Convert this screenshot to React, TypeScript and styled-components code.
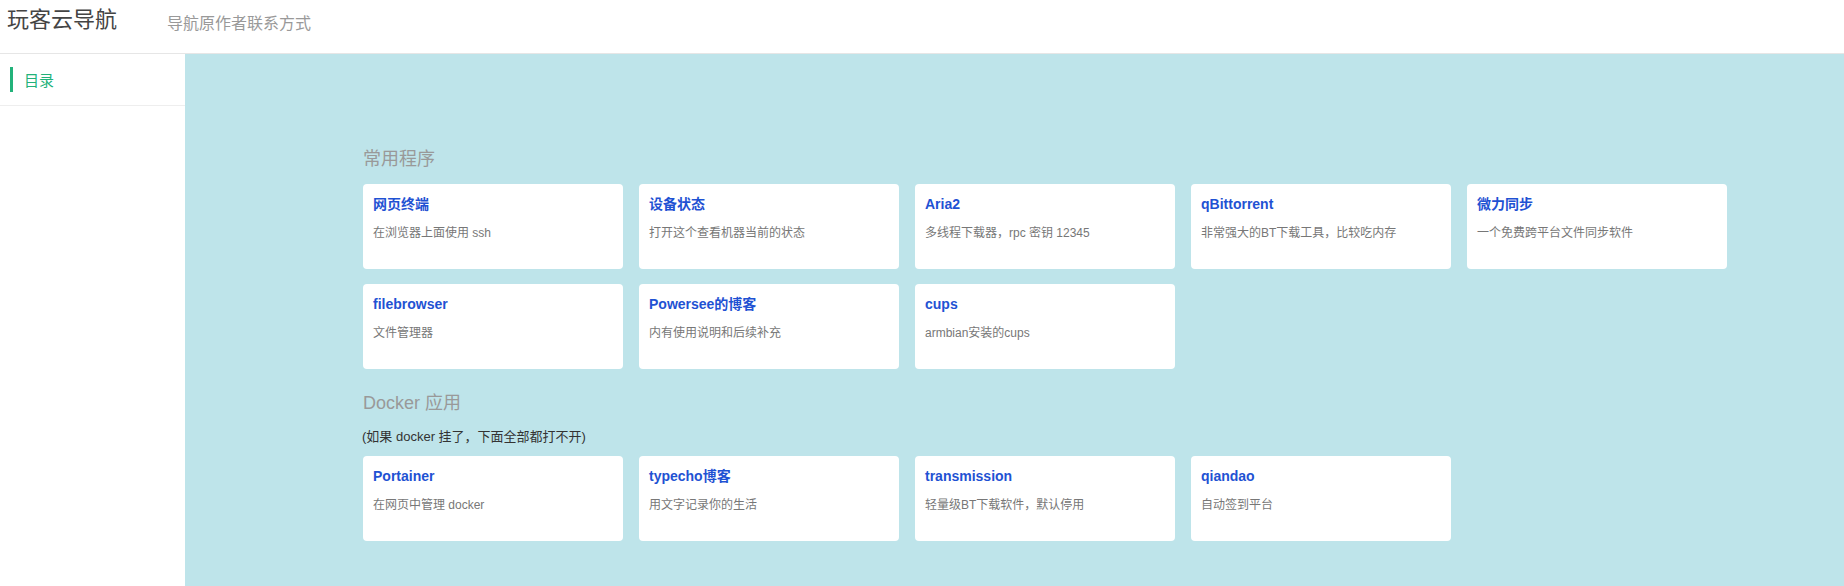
import styled, { createGlobalStyle } from "styled-components";

const GlobalStyle = createGlobalStyle`
  html, body {
    margin: 0;
    padding: 0;
    background: #ffffff;
    font-family: "Liberation Sans", "Noto Sans CJK SC", Arial, sans-serif;
  }
  * {
    box-sizing: border-box;
  }
`;

type Site = { title: string; desc: string };

const groups: { name: string; note?: string; sites: Site[] }[] = [
  {
    name: "常用程序",
    sites: [
      { title: "网页终端", desc: "在浏览器上面使用 ssh" },
      { title: "设备状态", desc: "打开这个查看机器当前的状态" },
      { title: "Aria2", desc: "多线程下载器，rpc 密钥 12345" },
      { title: "qBittorrent", desc: "非常强大的BT下载工具，比较吃内存" },
      { title: "微力同步", desc: "一个免费跨平台文件同步软件" },
      { title: "filebrowser", desc: "文件管理器" },
      { title: "Powersee的博客", desc: "内有使用说明和后续补充" },
      { title: "cups", desc: "armbian安装的cups" },
    ],
  },
  {
    name: "Docker 应用",
    note: "(如果 docker 挂了，下面全部都打不开)",
    sites: [
      { title: "Portainer", desc: "在网页中管理 docker" },
      { title: "typecho博客", desc: "用文字记录你的生活" },
      { title: "transmission", desc: "轻量级BT下载软件，默认停用" },
      { title: "qiandao", desc: "自动签到平台" },
    ],
  },
];

export default function App() {
  return (
    <>
      <GlobalStyle />
      <Page>
        <Header>
          <Brand>玩客云导航</Brand>
          <HeaderLink>导航原作者联系方式</HeaderLink>
        </Header>
        <Body>
          <Sidebar>
            <MenuItem>
              <MenuMark />
              <span>目录</span>
            </MenuItem>
          </Sidebar>
          <Main>
            {groups.map((g) => (
              <Section key={g.name}>
                <SectionTitle>{g.name}</SectionTitle>
                {g.note && <Note>{g.note}</Note>}
                <CardGrid>
                  {g.sites.map((s) => (
                    <Card key={s.title}>
                      <CardTitle>{s.title}</CardTitle>
                      <CardDesc>{s.desc}</CardDesc>
                    </Card>
                  ))}
                </CardGrid>
              </Section>
            ))}
          </Main>
        </Body>
      </Page>
    </>
  );
}

const Page = styled.div`
  display: flex;
  flex-direction: column;
  min-height: 586px;
`;

const Header = styled.div`
  display: flex;
  align-items: flex-start;
  height: 54px;
  padding: 5px 0 0 7px;
  border-bottom: 1px solid #e6e6e6;
  background: #ffffff;
`;

const Brand = styled.div`
  font-size: 22px;
  line-height: 30px;
  color: #444444;
  width: 160px;
`;

const HeaderLink = styled.div`
  font-size: 16px;
  line-height: 22px;
  color: #999999;
  margin-top: 8px;
  cursor: pointer;
`;

const Body = styled.div`
  display: flex;
  flex: 1;
`;

const Sidebar = styled.div`
  width: 185px;
  flex-shrink: 0;
  background: #ffffff;
`;

const MenuItem = styled.div`
  display: flex;
  align-items: center;
  gap: 11px;
  height: 52px;
  padding-left: 10px;
  border-bottom: 1px solid #eeeeee;
  font-size: 15px;
  color: #22b27a;
  cursor: pointer;
`;

const MenuMark = styled.div`
  width: 3px;
  height: 25px;
  background: #22b27a;
`;

const Main = styled.div`
  flex: 1;
  background: #bee4ea;
  padding: 92px 116px 46px 178px;
`;

const Section = styled.div`
  & + & {
    margin-top: 21px;
  }
`;

const SectionTitle = styled.div`
  font-size: 18px;
  line-height: 27px;
  color: #999999;
  margin-bottom: 11px;
`;

const Note = styled.div`
  font-size: 13px;
  line-height: 18px;
  color: #333333;
  margin-bottom: 10px;
  margin-left: -1px;
`;

const CardGrid = styled.div`
  display: flex;
  flex-wrap: wrap;
  gap: 15px 16px;
`;

const Card = styled.div`
  width: 260px;
  height: 85px;
  background: #ffffff;
  border-radius: 4px;
  padding: 10px 10px;
  cursor: pointer;
`;

const CardTitle = styled.div`
  font-size: 14px;
  line-height: 20px;
  font-weight: bold;
  color: #1f52d3;
`;

const CardDesc = styled.div`
  font-size: 12px;
  line-height: 16px;
  color: #777777;
  margin-top: 11px;
`;
